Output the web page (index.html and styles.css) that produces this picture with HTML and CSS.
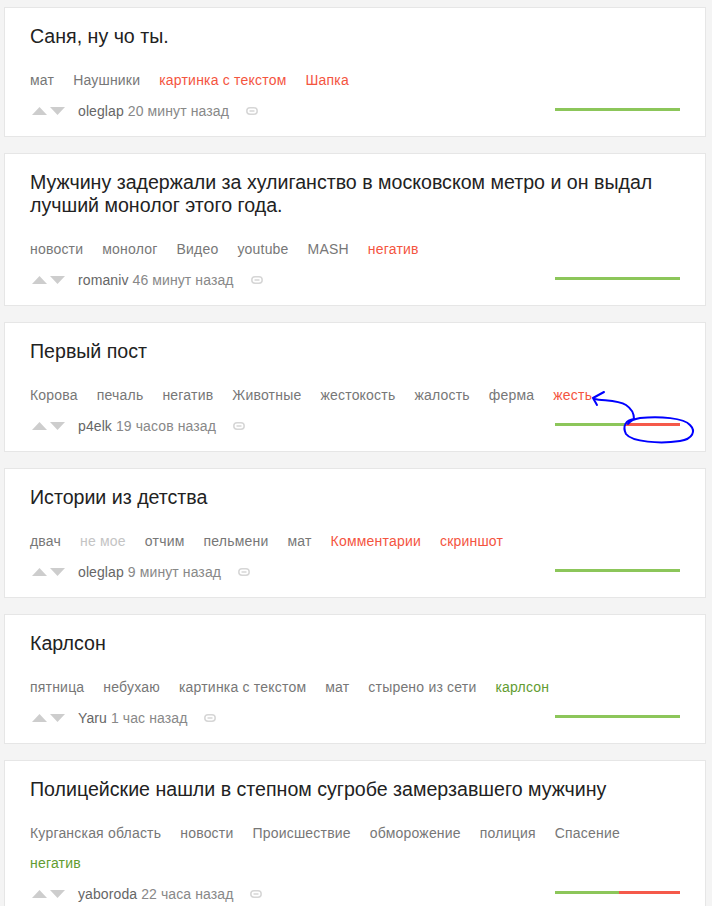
FILE: index.html
```html
<!DOCTYPE html>
<html lang="ru">
<head>
<meta charset="utf-8">
<title>Посты</title>
<link rel="stylesheet" href="styles.css">
</head>
<body>
<div class="feed">

  <article class="card">
    <h2 class="title">Саня, ну чо ты.</h2>
    <div class="tags">
      <span class="tag">мат</span>
      <span class="tag">Наушники</span>
      <span class="tag red">картинка с текстом</span>
      <span class="tag red">Шапка</span>
    </div>
    <div class="meta">
      <span class="votes">
        <svg class="vote" width="15" height="8" viewBox="0 0 15 8"><polygon points="0,8 7.5,0 15,8" /></svg>
        <svg class="vote" width="15" height="8" viewBox="0 0 15 8"><polygon points="0,0 15,0 7.5,8" /></svg>
      </span>
      <span class="user">oleglap</span>
      <span class="time">20 минут назад</span>
      <svg class="link" width="12" height="8" viewBox="0 0 12 8"><rect x="0.8" y="0.8" width="10.4" height="6.4" rx="3.2" /><line x1="3.5" y1="4" x2="8.5" y2="4" /></svg>
      <span class="rating"><span class="pos" style="width:100%"></span></span>
    </div>
  </article>

  <article class="card">
    <h2 class="title">Мужчину задержали за хулиганство в московском метро и он выдал лучший монолог этого года.</h2>
    <div class="tags">
      <span class="tag">новости</span>
      <span class="tag">монолог</span>
      <span class="tag">Видео</span>
      <span class="tag">youtube</span>
      <span class="tag">MASH</span>
      <span class="tag red">негатив</span>
    </div>
    <div class="meta">
      <span class="votes">
        <svg class="vote" width="15" height="8" viewBox="0 0 15 8"><polygon points="0,8 7.5,0 15,8" /></svg>
        <svg class="vote" width="15" height="8" viewBox="0 0 15 8"><polygon points="0,0 15,0 7.5,8" /></svg>
      </span>
      <span class="user">romaniv</span>
      <span class="time">46 минут назад</span>
      <svg class="link" width="12" height="8" viewBox="0 0 12 8"><rect x="0.8" y="0.8" width="10.4" height="6.4" rx="3.2" /><line x1="3.5" y1="4" x2="8.5" y2="4" /></svg>
      <span class="rating"><span class="pos" style="width:100%"></span></span>
    </div>
  </article>

  <article class="card">
    <h2 class="title">Первый пост</h2>
    <div class="tags">
      <span class="tag">Корова</span>
      <span class="tag">печаль</span>
      <span class="tag">негатив</span>
      <span class="tag">Животные</span>
      <span class="tag">жестокость</span>
      <span class="tag">жалость</span>
      <span class="tag">ферма</span>
      <span class="tag red">жесть</span>
    </div>
    <div class="meta">
      <span class="votes">
        <svg class="vote" width="15" height="8" viewBox="0 0 15 8"><polygon points="0,8 7.5,0 15,8" /></svg>
        <svg class="vote" width="15" height="8" viewBox="0 0 15 8"><polygon points="0,0 15,0 7.5,8" /></svg>
      </span>
      <span class="user">p4elk</span>
      <span class="time">19 часов назад</span>
      <svg class="link" width="12" height="8" viewBox="0 0 12 8"><rect x="0.8" y="0.8" width="10.4" height="6.4" rx="3.2" /><line x1="3.5" y1="4" x2="8.5" y2="4" /></svg>
      <span class="rating"><span class="pos" style="width:56%"></span><span class="neg" style="width:44%"></span></span>
    </div>
  </article>

  <article class="card">
    <h2 class="title">Истории из детства</h2>
    <div class="tags">
      <span class="tag">двач</span>
      <span class="tag light">не мое</span>
      <span class="tag">отчим</span>
      <span class="tag">пельмени</span>
      <span class="tag">мат</span>
      <span class="tag red">Комментарии</span>
      <span class="tag red">скриншот</span>
    </div>
    <div class="meta">
      <span class="votes">
        <svg class="vote" width="15" height="8" viewBox="0 0 15 8"><polygon points="0,8 7.5,0 15,8" /></svg>
        <svg class="vote" width="15" height="8" viewBox="0 0 15 8"><polygon points="0,0 15,0 7.5,8" /></svg>
      </span>
      <span class="user">oleglap</span>
      <span class="time">9 минут назад</span>
      <svg class="link" width="12" height="8" viewBox="0 0 12 8"><rect x="0.8" y="0.8" width="10.4" height="6.4" rx="3.2" /><line x1="3.5" y1="4" x2="8.5" y2="4" /></svg>
      <span class="rating"><span class="pos" style="width:100%"></span></span>
    </div>
  </article>

  <article class="card">
    <h2 class="title">Карлсон</h2>
    <div class="tags">
      <span class="tag">пятница</span>
      <span class="tag">небухаю</span>
      <span class="tag">картинка с текстом</span>
      <span class="tag">мат</span>
      <span class="tag">стырено из сети</span>
      <span class="tag green">карлсон</span>
    </div>
    <div class="meta">
      <span class="votes">
        <svg class="vote" width="15" height="8" viewBox="0 0 15 8"><polygon points="0,8 7.5,0 15,8" /></svg>
        <svg class="vote" width="15" height="8" viewBox="0 0 15 8"><polygon points="0,0 15,0 7.5,8" /></svg>
      </span>
      <span class="user">Yaru</span>
      <span class="time">1 час назад</span>
      <svg class="link" width="12" height="8" viewBox="0 0 12 8"><rect x="0.8" y="0.8" width="10.4" height="6.4" rx="3.2" /><line x1="3.5" y1="4" x2="8.5" y2="4" /></svg>
      <span class="rating"><span class="pos" style="width:100%"></span></span>
    </div>
  </article>

  <article class="card">
    <h2 class="title">Полицейские нашли в степном сугробе замерзавшего мужчину</h2>
    <div class="tags">
      <span class="tag">Курганская область</span>
      <span class="tag">новости</span>
      <span class="tag">Происшествие</span>
      <span class="tag">обморожение</span>
      <span class="tag">полиция</span>
      <span class="tag">Спасение</span>
      <span class="tag green">негатив</span>
    </div>
    <div class="meta">
      <span class="votes">
        <svg class="vote" width="15" height="8" viewBox="0 0 15 8"><polygon points="0,8 7.5,0 15,8" /></svg>
        <svg class="vote" width="15" height="8" viewBox="0 0 15 8"><polygon points="0,0 15,0 7.5,8" /></svg>
      </span>
      <span class="user">yaboroda</span>
      <span class="time">22 часа назад</span>
      <svg class="link" width="12" height="8" viewBox="0 0 12 8"><rect x="0.8" y="0.8" width="10.4" height="6.4" rx="3.2" /><line x1="3.5" y1="4" x2="8.5" y2="4" /></svg>
      <span class="rating"><span class="pos" style="width:51.5%"></span><span class="neg" style="width:48.5%"></span></span>
    </div>
  </article>

</div>

<svg class="annotation" width="712" height="906" viewBox="0 0 712 906">
  <path d="M594 399 C 605 401, 618 400, 626 405 C 632 409, 634 414, 634 419" />
  <path d="M604 392 L 593 398 L 597 405" />
  <path d="M634 419 C 626 420, 622 426, 626 434 C 632 442, 660 444, 680 441 C 693 439, 696 431, 690 425 C 684 418, 660 416, 640 418 C 634 419, 630 421, 628 424" />
</svg>
</body>
</html>
```

FILE: styles.css
```css
html, body {
  margin: 0;
  padding: 0;
}

body {
  background: #f4f4f4;
  font-family: "Liberation Sans", Arial, sans-serif;
  position: relative;
  width: 712px;
  height: 906px;
  overflow: hidden;
}

.feed {
  display: flex;
  flex-direction: column;
  gap: 16px;
  padding: 7px 6px 0 4px;
}

.card {
  background: #fff;
  border: 1px solid #e6e6e6;
  padding: 17px 25px 10px 25px;
}

.title {
  margin: 0 0 17px 0;
  font-size: 19.6px;
  font-weight: normal;
  line-height: 23px;
  color: #222;
}

.tags {
  display: flex;
  flex-wrap: wrap;
  column-gap: 19px;
  font-size: 14px;
  letter-spacing: 0.2px;
  line-height: 30px;
  color: #777;
}

.tag.red { color: #f4553f; }
.tag.green { color: #629c31; }
.tag.light { color: #c4c4c4; }

.meta {
  display: flex;
  align-items: center;
  height: 31px;
  font-size: 14px;
  letter-spacing: 0.1px;
}

.votes {
  display: flex;
  gap: 3px;
  margin-left: 2px;
  margin-right: 13px;
}

.vote polygon { fill: #cdcdcd; }

.user {
  color: #666;
  margin-right: 4px;
}

.time {
  color: #888;
  margin-right: 17px;
}

.link rect, .link line {
  fill: none;
  stroke: #d6d6d6;
  stroke-width: 1.5;
}

.rating {
  display: flex;
  margin-left: auto;
  width: 125px;
  height: 3px;
  margin-top: -2px;
}

.rating .pos { background: #8cc65a; height: 3px; }
.rating .neg { background: #f5594a; height: 3px; }

.annotation {
  position: absolute;
  left: 0;
  top: 0;
  pointer-events: none;
}

.annotation path {
  fill: none;
  stroke: #0000ff;
  stroke-width: 2;
  stroke-linecap: round;
  stroke-linejoin: round;
}
```
